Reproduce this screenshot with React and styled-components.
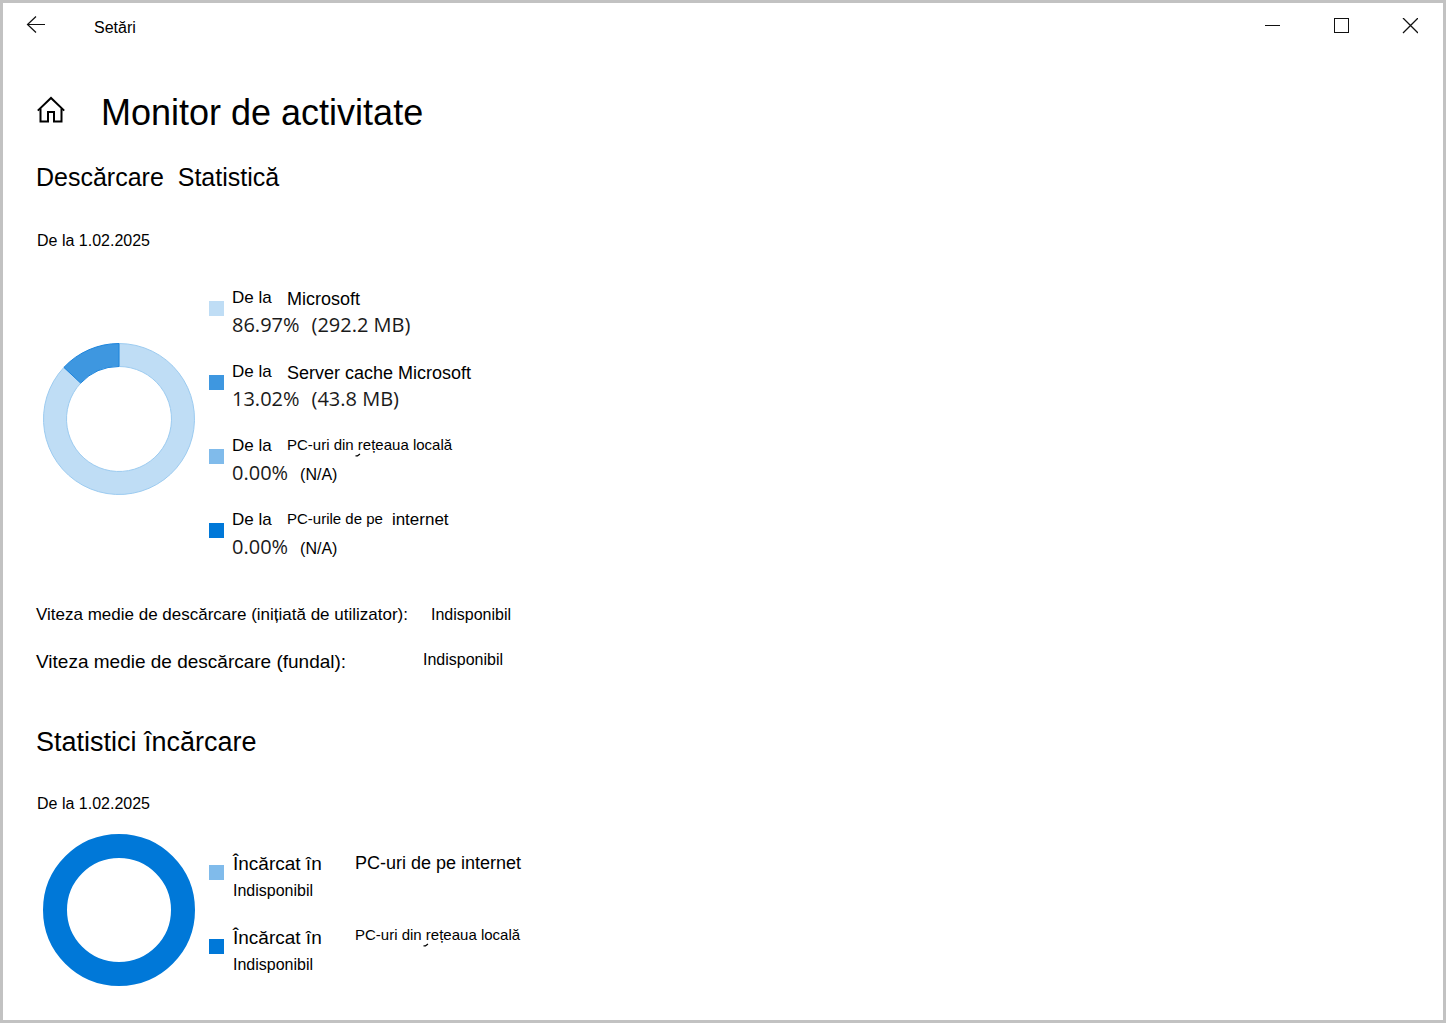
import React from "react";
import styled, { createGlobalStyle } from "styled-components";

const GlobalStyle = createGlobalStyle`
  body {
    margin: 0;
    background: #ffffff;
    color: #000000;
    font-family: "Liberation Sans", Arial, sans-serif;
  }

  h1, h2, p, ul {
    margin: 0;
    padding: 0;
    font-weight: 400;
  }
`;

const Window = styled.div`
  box-sizing: border-box;
  min-height: 100vh;
  border: 3px solid #c2c2c2;
`;

const TitleBar = styled.header`
  display: flex;
  align-items: center;
  justify-content: space-between;
  height: 46px;
  padding: 0 10px;
`;

const BarGroup = styled.div`
  display: flex;
  align-items: center;
  gap: ${(props) => props.$gap}px;
`;

const BarButton = styled.button`
  display: flex;
  align-items: center;
  justify-content: center;
  width: 46px;
  height: 46px;
  padding: 0;
  border: none;
  background: transparent;
  color: #111111;

  &:hover {
    background: #e6e6e6;
  }
`;

const AppName = styled.span`
  padding-top: 4px;
  font-size: 16px;
  line-height: 20px;
`;

const Page = styled.main`
  padding: 42px 33px 20px;
`;

const PageHeader = styled.div`
  display: flex;
  align-items: center;
  gap: 35px;
  margin-bottom: 26px;
`;

const HomeButton = styled.button`
  display: flex;
  padding: 0;
  border: none;
  background: transparent;
  color: #000000;
`;

const PageTitle = styled.h1`
  font-size: 36px;
  line-height: 44px;
`;

const SectionTitle = styled.h2`
  font-size: ${(props) => props.$size}px;
  line-height: 32px;
  white-space: pre-wrap;
`;

const Since = styled.p`
  margin-top: ${(props) => props.$top}px;
  padding-left: 1px;
  font-size: 16px;
  line-height: 20px;
`;

const Stats = styled.div`
  display: flex;
  align-items: flex-start;
  gap: 14px;
  margin-top: ${(props) => props.$top}px;
  padding-left: 7px;
`;

const Chart = styled.svg`
  flex: none;
  width: 152px;
  height: 152px;
  margin-top: ${(props) => props.$top}px;
`;

const Legend = styled.ul`
  padding-top: ${(props) => props.$top}px;
  list-style: none;
`;

const LegendItem = styled.li`
  display: flex;
  align-items: flex-start;
  gap: ${(props) => props.$gap}px;
  min-height: 74px;
`;

const Swatch = styled.span`
  flex: none;
  width: 15px;
  height: 15px;
  margin-top: 14px;
  background: ${(props) => props.$color};
`;

const LegendLine = styled.div`
  display: flex;
  align-items: flex-start;
  height: 24px;
`;

const sizes = {
  small: "15px/20px",
  medium: "17px/22px",
  large: "18px/24px",
  xlarge: "19px/26px",
};

const Text = styled.span`
  position: relative;
  font: ${(props) => sizes[props.$size]} "Liberation Sans", Arial, sans-serif;
  white-space: nowrap;
`;

const Lead = styled(Text)`
  min-width: ${(props) => props.$width}px;
`;

const Extra = styled(Text)`
  margin-left: 9px;
`;

// stray pen mark under the "r" of "rețeaua"
const Tick = styled.svg`
  position: absolute;
  left: 68px;
  top: 18px;
  width: 6px;
  height: 4px;
`;

const Amount = styled.div`
  display: flex;
  align-items: baseline;
  gap: 12px;
  font-size: 16px;
  line-height: 28px;
`;

const Figure = styled.span`
  color: #1a1a1a;
  font-family: "Open Sans", "Noto Sans", sans-serif;
  font-size: 20px;
`;

const Status = styled.div`
  font-size: 16px;
  line-height: 32px;
`;

const Speeds = styled.div`
  display: grid;
  gap: 23px;
  margin: 21px 0 51px;
`;

const SpeedRow = styled.div`
  display: flex;
  align-items: flex-start;
`;

const SpeedValue = styled.span`
  font-size: 16px;
  line-height: 22px;
`;

const downloads = [
  {
    color: "#bfddf5",
    name: "Microsoft",
    size: "large",
    percent: "86.97%",
    amount: "(292.2 MB)",
  },
  {
    color: "#3e97e0",
    name: "Server cache Microsoft",
    size: "large",
    percent: "13.02%",
    amount: "(43.8 MB)",
  },
  {
    color: "#80bbeb",
    name: "PC-uri din rețeaua locală",
    size: "small",
    tick: true,
    percent: "0.00%",
  },
  {
    color: "#0078d8",
    name: "PC-urile de pe",
    extra: "internet",
    size: "small",
    percent: "0.00%",
  },
];

const uploads = [
  { color: "#80bbeb", name: "PC-uri de pe internet", size: "large" },
  {
    color: "#0078d8",
    name: "PC-uri din rețeaua locală",
    size: "small",
    tick: true,
  },
];

const point = (radius, share) => {
  const angle = share * 2 * Math.PI;
  return `${76 + radius * Math.sin(angle)} ${76 - radius * Math.cos(angle)}`;
};

// Path of one ring segment, from and to are shares of the full circle
const segment = (from, to, outer, inner) => {
  const large = to - from > 0.5 ? 1 : 0;
  return `M${point(outer, from)} A${outer} ${outer} 0 ${large} 1 ${point(outer, to)} L${point(inner, to)} A${inner} ${inner} 0 ${large} 0 ${point(inner, from)} Z`;
};

const Name = ({ item }) => (
  <>
    <Text $size={item.size}>
      {item.name}
      {item.tick && (
        <Tick viewBox="0 0 6 4" aria-hidden="true">
          <path
            d="M0.5 2.8H2.5L5 1"
            fill="none"
            stroke="#000000"
            strokeWidth="1.2"
          />
        </Tick>
      )}
    </Text>
    {item.extra && <Extra $size="medium">{item.extra}</Extra>}
  </>
);

const App = () => {
  return (
    <>
      <GlobalStyle />
      <Window>
        <TitleBar>
          <BarGroup $gap={35}>
            <BarButton aria-label="Înapoi">
              <svg width="20" height="20" fill="none" stroke="currentColor">
                <path d="M19 8.5H1.5M10 0.5L1.5 8.5L10 16.5" strokeWidth="1.2" />
              </svg>
            </BarButton>
            <AppName>Setări</AppName>
          </BarGroup>
          <BarGroup $gap={23}>
            <BarButton aria-label="Minimizare">
              <svg width="16" height="16" stroke="currentColor">
                <path d="M1 7.5H16" />
              </svg>
            </BarButton>
            <BarButton aria-label="Maximizare">
              <svg width="16" height="16" fill="none" stroke="currentColor">
                <rect x="1.5" y="0.5" width="14" height="14" />
              </svg>
            </BarButton>
            <BarButton aria-label="Închidere">
              <svg width="16" height="16" stroke="currentColor">
                <path d="M1 0L16 15M16 0L1 15" strokeWidth="1.3" />
              </svg>
            </BarButton>
          </BarGroup>
        </TitleBar>
        <Page>
          <PageHeader>
            <HomeButton aria-label="Pagina de pornire">
              <svg
                width="30"
                height="34"
                fill="none"
                stroke="currentColor"
                strokeWidth="2"
              >
                <path d="M1.8 14.6L15 2L28.2 14.6" />
                <path d="M4.5 12.5V25.5H12V16H18V25.5H25.5V12.5" />
              </svg>
            </HomeButton>
            <PageTitle>Monitor de activitate</PageTitle>
          </PageHeader>

          <SectionTitle $size={25}>{"Descărcare  Statistică"}</SectionTitle>
          <Since $top={38}>De la 1.02.2025</Since>
          <Stats $top={36}>
            <Chart $top={56} viewBox="0 0 152 152" aria-hidden="true">
              <path
                d={segment(0, 0.8698, 75.5, 52.5)}
                fill="#bfddf5"
                stroke="#9ccbf0"
              />
              <path
                d={segment(0.8698, 1, 75.5, 52.5)}
                fill="#3e97e0"
                stroke="#1c84dc"
              />
            </Chart>
            <Legend>
              {downloads.map((item) => (
                <LegendItem key={item.name} $gap={8}>
                  <Swatch $color={item.color} />
                  <div>
                    <LegendLine>
                      <Lead $size="medium" $width={55}>
                        De la
                      </Lead>
                      <Name item={item} />
                    </LegendLine>
                    <Amount>
                      <Figure>{item.percent}</Figure>
                      {item.amount ? (
                        <Figure>{item.amount}</Figure>
                      ) : (
                        <span>(N/A)</span>
                      )}
                    </Amount>
                  </div>
                </LegendItem>
              ))}
            </Legend>
          </Stats>
          <Speeds>
            <SpeedRow>
              <Lead $size="medium" $width={395}>
                Viteza medie de descărcare (inițiată de utilizator):
              </Lead>
              <SpeedValue>Indisponibil</SpeedValue>
            </SpeedRow>
            <SpeedRow>
              <Lead $size="xlarge" $width={387}>
                Viteza medie de descărcare (fundal):
              </Lead>
              <SpeedValue>Indisponibil</SpeedValue>
            </SpeedRow>
          </Speeds>

          <SectionTitle $size={27}>Statistici încărcare</SectionTitle>
          <Since $top={36}>De la 1.02.2025</Since>
          <Stats $top={20}>
            <Chart viewBox="0 0 152 152" aria-hidden="true">
              <circle
                cx="76"
                cy="76"
                r="64"
                fill="none"
                stroke="#0078d8"
                strokeWidth="24"
              />
            </Chart>
            <Legend $top={17}>
              {uploads.map((item) => (
                <LegendItem key={item.name} $gap={9}>
                  <Swatch $color={item.color} />
                  <div>
                    <LegendLine>
                      <Lead $size="xlarge" $width={122}>
                        Încărcat în
                      </Lead>
                      <Name item={item} />
                    </LegendLine>
                    <Status>Indisponibil</Status>
                  </div>
                </LegendItem>
              ))}
            </Legend>
          </Stats>
        </Page>
      </Window>
    </>
  );
};

export default App;
